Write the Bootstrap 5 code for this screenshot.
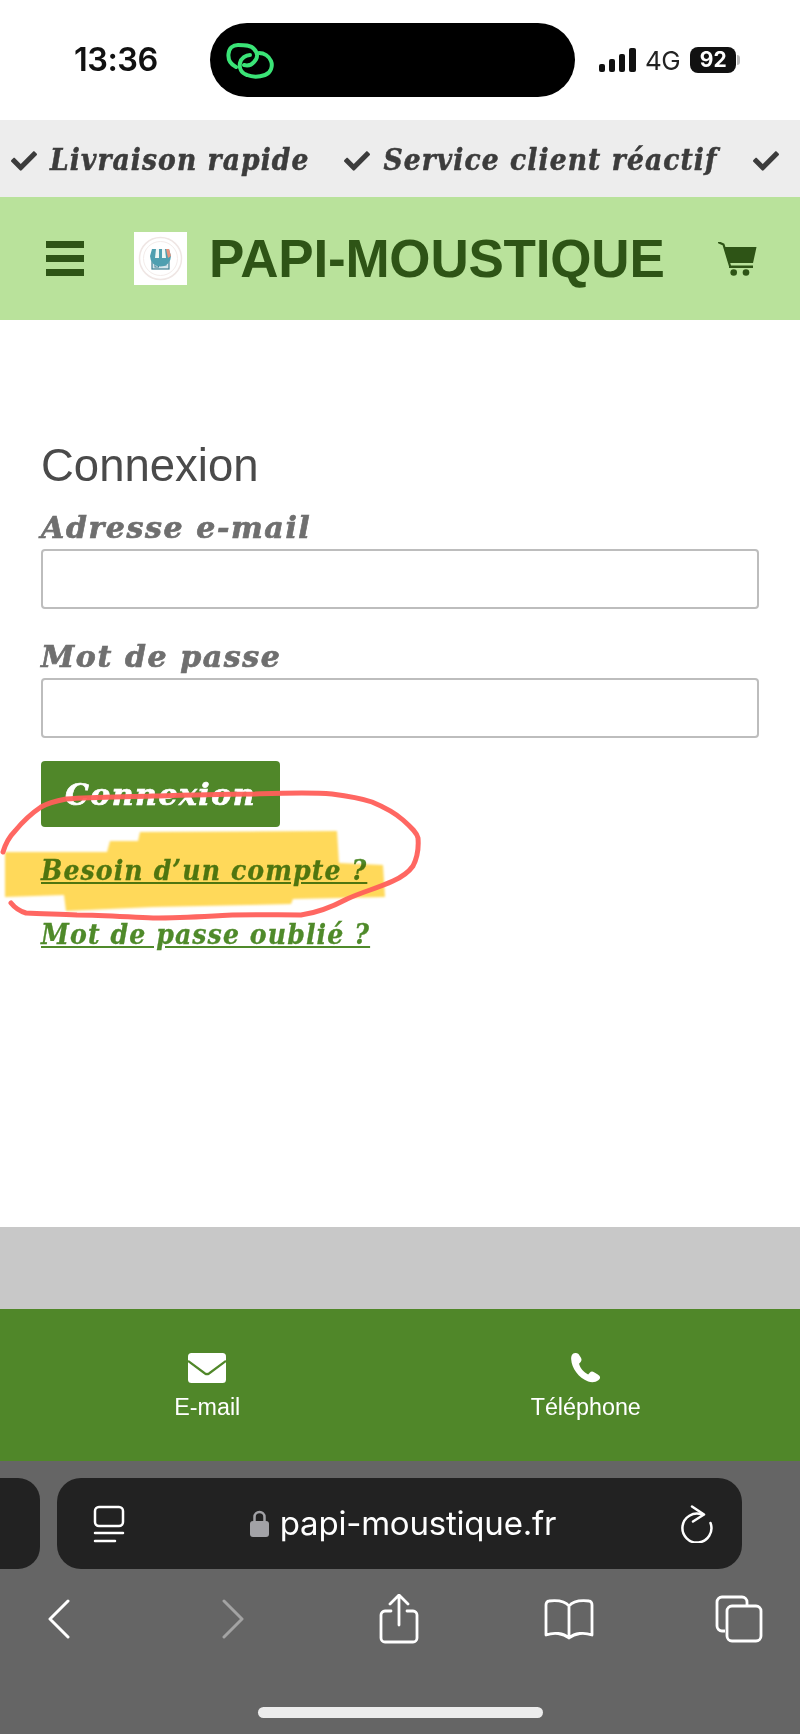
<!DOCTYPE html>
<html lang="fr">
<head>
    <meta charset="UTF-8">
    <title>Connexion - Papi-Moustique</title>
    <meta name="viewport" content="width=device-width, initial-scale=1">
    <link href="https://cdn.jsdelivr.net/npm/bootstrap@5.3.0/dist/css/bootstrap.min.css" rel="stylesheet">
    <style>
        html, body { height: 1734px; overflow: hidden; }
        body { font-family: "Liberation Sans", Arial, sans-serif; background: #fff; width: 800px; position: relative; }
        .deco { font-family: "DejaVu Serif", serif; font-weight: 700; font-style: italic; -webkit-text-stroke: .7px currentColor; }
        .deco-narrow { font-family: "DejaVu Serif Condensed", "DejaVu Serif", serif; font-weight: 700; font-style: italic; -webkit-text-stroke: .5px currentColor; }

        /* iOS status bar */
        .status-area { height: 120px; padding-left: 74px; }
        .status-time { font-family: Inter, sans-serif; font-weight: 600; font-size: 32.5px; width: 136px; color: #111; letter-spacing: -.5px; }
        .island { width: 365px; height: 74px; background: #000; border-radius: 37px; margin-right: 24px; padding-left: 15px; }
        .status-net { font-family: Inter, sans-serif; font-size: 26px; color: #222; margin: 0 10px 0 8px; letter-spacing: -.5px; }
        .batt { width: 46px; height: 26px; background: #111; color: #fff; border-radius: 8px; font-family: Inter, sans-serif; font-weight: 700; font-size: 21px; line-height: 26px; text-align: center; }
        .batt-tip { width: 3px; height: 10px; background: #bbb; border-radius: 0 3px 3px 0; margin-left: 1px; }

        /* shop header */
        .promo-strip { height: 77px; background: #ededed; color: #3c3c3c; font-size: 29.5px; letter-spacing: 1.1px; white-space: nowrap; overflow: hidden; padding: 4px 0 0 11px; }
        .promo-item { margin-right: 35px; gap: 13px; }
        .promo-item svg { flex-shrink: 0; }
        .shop-bar { height: 123px; background: #b9e29b; color: #2e5416; padding-left: 46px; }
        .burger { width: 38px; gap: 7px; margin-right: 50px; }
        .burger span { height: 7px; background: #2e5416; display: block; }
        .shop-logo { width: 53px; height: 53px; background: #fff; margin-right: 22px; }
        .shop-name { font-size: 53px; font-weight: 700; line-height: 1; margin: 0 53px 0 0; letter-spacing: -.2px; }

        /* login form */
        .login-area { flex: 1; padding: 118px 41px 0; color: #4a4a4a; }
        .login-title { font-size: 45.5px; font-weight: 400; line-height: 56px; margin: 0 0 16px; }
        .login-label { display: block; font-size: 30px; letter-spacing: 1.6px; color: #6f6f6f; line-height: 36px; margin-bottom: 3px; }
        .login-input { height: 60px; border: 2px solid #bdbdbd; border-radius: 4px; margin-bottom: 30px; }
        .login-btn { width: 239px; height: 66px; background: #508729; border: 0; color: #fff; font-size: 30px; letter-spacing: 1.5px; border-radius: 4px; margin-top: -7px; padding: 0; }
        .login-link { display: block; color: #4f8a2a; font-size: 28px; letter-spacing: 1.1px; line-height: 36px; text-decoration: underline; -webkit-text-stroke: .3px currentColor; }
        .first-link { margin-top: 26px; margin-bottom: 28px; }

        /* hand drawn marks on the screenshot */
        .marks { position: absolute; left: 0; top: 0; pointer-events: none; }
        .mark-yellow { fill: #ffd95a; mix-blend-mode: multiply; filter: blur(1.2px); }
        .mark-red { fill: none; stroke: #ff5f5a; stroke-width: 5; stroke-linecap: round; stroke-linejoin: round; opacity: .95; }

        /* footer */
        .footer-gap { height: 82px; background: #c8c8c8; }
        .contact-bar { height: 152px; background: #508729; color: #fff; padding: 44px 25px 0 18px; font-size: 23.3px; line-height: 28px; }
        .contact-bar svg { display: block; margin: 0 auto 10px; }

        /* Safari chrome */
        .safari { height: 273px; background: #656565; color: #fff; position: relative; }
        .url-row { padding-top: 17px; height: 108px; }
        .prev-tab { width: 40px; height: 91px; background: #222; border-radius: 0 22px 22px 0; margin-right: 17px; }
        .url-box { width: 685px; height: 91px; background: #222; border-radius: 24px; padding: 0 29px 0 36px; }
        .url-text { font-family: Inter, sans-serif; font-size: 33px; letter-spacing: -.2px; margin-left: 11px; }
        .tool-row { padding-left: 37px; gap: 126px; height: 66px; margin-top: 17px; }
        .tool-cell { width: 44px; display: flex; justify-content: center; }
        .tool-cell svg { flex-shrink: 0; }
        .fwd-cell { transform: translateX(4px); }
        .home-pill { position: absolute; left: 258px; top: 246px; width: 285px; height: 11px; background: #ececec; border-radius: 6px; }
    </style>
</head>
<body class="d-flex flex-column">

<div class="status-area d-flex align-items-center flex-shrink-0 bg-white">
    <div class="status-time">13:36</div>
    <div class="island d-flex align-items-center">
        <svg width="50" height="40" viewBox="-2 -2 50 40" fill="none" stroke="#3be477" stroke-width="4" stroke-linecap="round">
            <path d="M9 25C3 22 1 17 1.500 12 2 6 6 3 11 3 17 3 24 3 27 7 31 11 31 16 27 20 25 22.500 21 24 17 23"/>
            <path d="M32 11C37 11 42 14 44 19 46 24 44 31 38 33 32 35 25 35 20 33 14 31 12 26 13 21 14 16 19 13 23 13"/>
        </svg>
    </div>
    <svg width="38" height="24" viewBox="0 0 38 24" fill="#111">
        <rect x="0" y="16" width="6" height="8" rx="2"/>
        <rect x="10" y="11" width="6" height="13" rx="2"/>
        <rect x="20" y="6" width="6" height="18" rx="2"/>
        <rect x="30" y="0" width="7" height="24" rx="2"/>
    </svg>
    <span class="status-net">4G</span>
    <div class="batt">92</div>
    <div class="batt-tip"></div>
</div>

<div class="promo-strip deco-narrow d-flex align-items-center flex-shrink-0">
    <span class="promo-item d-flex align-items-center">
        <svg width="26" height="26" viewBox="0 0 512 512" fill="#3c3c3c"><path d="M173.9 439.4l-166.4-166.4c-10-10-10-26.2 0-36.2l36.2-36.2c10-10 26.2-10 36.2 0L192 312.7 432.1 72.6c10-10 26.2-10 36.2 0l36.2 36.2c10 10 10 26.2 0 36.2l-294.4 294.4c-10 10-26.2 10-36.2 0z"/></svg>
        Livraison rapide
    </span>
    <span class="promo-item d-flex align-items-center">
        <svg width="26" height="26" viewBox="0 0 512 512" fill="#3c3c3c"><path d="M173.9 439.4l-166.4-166.4c-10-10-10-26.2 0-36.2l36.2-36.2c10-10 26.2-10 36.2 0L192 312.7 432.1 72.6c10-10 26.2-10 36.2 0l36.2 36.2c10 10 10 26.2 0 36.2l-294.4 294.4c-10 10-26.2 10-36.2 0z"/></svg>
        Service client réactif
    </span>
    <span class="promo-item d-flex align-items-center">
        <svg width="26" height="26" viewBox="0 0 512 512" fill="#3c3c3c"><path d="M173.9 439.4l-166.4-166.4c-10-10-10-26.2 0-36.2l36.2-36.2c10-10 26.2-10 36.2 0L192 312.7 432.1 72.6c10-10 26.2-10 36.2 0l36.2 36.2c10 10 10 26.2 0 36.2l-294.4 294.4c-10 10-26.2 10-36.2 0z"/></svg>
    </span>
</div>

<nav class="shop-bar d-flex align-items-center flex-shrink-0">
    <div class="burger d-flex flex-column"><span></span><span></span><span></span></div>
    <svg class="shop-logo flex-shrink-0" viewBox="0 0 53 53">
        <rect width="53" height="53" fill="#fff"/>
        <circle cx="26.500" cy="26.500" r="21" fill="none" stroke="#efe6e4" stroke-width="1.500"/>
        <circle cx="26.500" cy="26.500" r="17" fill="none" stroke="#f3ecea" stroke-width="1"/>
        <rect x="18" y="25" width="17" height="12" fill="#d6e6ec" stroke="#3f7f92" stroke-width="1.200"/>
        <rect x="21" y="29" width="3.500" height="6" fill="#fff" stroke="#3f7f92"/>
        <rect x="27" y="29" width="5" height="4" fill="#fff" stroke="#3f7f92"/>
        <path d="M18 17h17l2 7a2.500 2.500 0 0 1-21 0z" fill="#4f9fb0"/>
        <path d="M22 17h3v9h-4zM28 17h3l1 9h-4z" fill="#eef6f4"/>
        <path d="M32 17h3l2 7-3 2z" fill="#e8927c"/>
    </svg>
    <div class="shop-name">PAPI-MOUSTIQUE</div>
    <svg width="39" height="34" viewBox="11 9 39 34" fill="#2e5416">
        <path d="M12 9.500l4.500 2 6.500 21.500" fill="none" stroke="#2e5416" stroke-width="2.200" stroke-linecap="round" stroke-linejoin="round"/>
        <path d="M17 14H49.500L46 30H21.500z"/>
        <rect x="22" y="32.500" width="24" height="2.500"/>
        <circle cx="26.700" cy="39.500" r="3.300"/>
        <circle cx="39" cy="39.500" r="3.300"/>
    </svg>
</nav>

<main class="login-area">
    <h1 class="login-title">Connexion</h1>
    <form>
        <label class="login-label deco" for="email">Adresse e-mail</label>
        <input id="email" class="form-control login-input" type="email">
        <label class="login-label deco" for="pass">Mot de passe</label>
        <input id="pass" class="form-control login-input" type="password">
        <button type="button" class="btn login-btn deco">Connexion</button>
    </form>
    <a href="#" class="login-link deco-narrow first-link">Besoin d’un compte ?</a>
    <a href="#" class="login-link deco-narrow">Mot de passe oublié ?</a>
</main>

<div class="footer-gap flex-shrink-0"></div>

<div class="contact-bar row g-0 flex-shrink-0 text-center">
    <div class="col-6">
        <svg width="38" height="30" viewBox="0 0 38 30">
            <rect width="38" height="30" rx="3.500" fill="#fff"/>
            <path d="M0 8L17 20.500C18.200 21.300 19.800 21.300 21 20.500L38 8" fill="none" stroke="#508729" stroke-width="2.200"/>
        </svg>
        E-mail
    </div>
    <div class="col-6">
        <svg width="30" height="30" viewBox="8 8 28 28" fill="#fff"><path d="M12 8C9 8 8 11 8.200 14 8.600 22 15 31 24 34.500 27 35.700 31 35.500 33.500 33.500 36 31.500 35.500 29.500 33 28L29.500 26C28 25 26.500 25.200 25.500 26.500L24 28C20 26 16.500 22 15.500 18L17 16.500C18.200 15 18 13.500 17 12L15 9C14 8 13 8 12 8Z"/></svg>
        Téléphone
    </div>
</div>

<div class="safari flex-shrink-0">
    <div class="url-row d-flex">
        <div class="prev-tab"></div>
        <div class="url-box d-flex align-items-center">
            <svg width="32" height="38" viewBox="0 0 32 38" fill="none" stroke="#fff" stroke-width="2.500" stroke-linecap="round">
                <rect x="2" y="2" width="28" height="19" rx="4"/>
                <path d="M2 28h28M2 36h20"/>
            </svg>
            <div class="flex-grow-1 d-flex align-items-center justify-content-center ps-3 pe-3">
                <svg width="19" height="27" viewBox="0 0 19 27">
                    <path d="M4.500 13V7a5 5 0 0 1 10 0v6" fill="none" stroke="#a2a2a6" stroke-width="2.500"/>
                    <rect x="0" y="11" width="19" height="16" rx="3" fill="#a2a2a6"/>
                </svg>
                <span class="url-text">papi-moustique.fr</span>
            </div>
            <svg width="32" height="38" viewBox="0 0 32 38" fill="none" stroke="#fff" stroke-width="2.500" stroke-linecap="round" stroke-linejoin="round">
                <path d="M21 9.500A14.500 14.500 0 1 0 29.500 18"/>
                <path d="M11 1.500l12 8-11 7"/>
            </svg>
        </div>
    </div>
    <div class="tool-row d-flex align-items-center">
        <div class="tool-cell"><svg width="24" height="40" viewBox="0 0 24 40" fill="none" stroke="#fff" stroke-width="3" stroke-linecap="round" stroke-linejoin="round"><path d="M21 2L3 20l18 18"/></svg></div>
        <div class="tool-cell fwd-cell"><svg width="24" height="40" viewBox="0 0 24 40" fill="none" stroke="#a3a3a3" stroke-width="3" stroke-linecap="round" stroke-linejoin="round"><path d="M3 2l18 18L3 38"/></svg></div>
        <div class="tool-cell"><svg width="40" height="50" viewBox="0 0 40 50" fill="none" stroke="#fff" stroke-width="2.800" stroke-linecap="round" stroke-linejoin="round"><path d="M12 17H6a4 4 0 0 0-4 4v23a4 4 0 0 0 4 4h28a4 4 0 0 0 4-4V21a4 4 0 0 0-4-4h-6"/><path d="M20 31V2M11 10l9-9 9 9"/></svg></div>
        <div class="tool-cell"><svg width="50" height="42" viewBox="0 0 50 42" fill="none" stroke="#fff" stroke-width="2.800" stroke-linecap="round" stroke-linejoin="round"><path d="M25 8C21 3 14 2 5 3 3 3 2 5 2 7v30c8-3 17-2 23 3 6-5 15-6 23-3V7c0-2-1-4-3-4-9-1-16 0-20 5zM25 8v32"/></svg></div>
        <div class="tool-cell"><svg width="48" height="48" viewBox="0 0 48 48" fill="none" stroke="#fff" stroke-width="2.800" stroke-linejoin="round"><path d="M10 36H7a5 5 0 0 1-5-5V7a5 5 0 0 1 5-5h20a5 5 0 0 1 5 5v4"/><rect x="12" y="11" width="34" height="35" rx="5"/></svg></div>
    </div>
    <div class="home-pill"></div>
</div>

<!-- highlight and circle drawn by hand over the page -->
<svg class="marks" width="800" height="1000" viewBox="0 0 800 1000">
    <path class="mark-yellow" d="M5 852H107L110 841H138L140 832 337 831 339 863 383 865 385 897 293 899 291 904 153 907 66 911 64 895 5 897Z"/>
    <path class="mark-red" d="M3 852C6 842 10 836 15 831 24 820 32 813 41 807 48 803 56 801 66 799 95 797 125 797 153 796 190 795 222 794 255 794 285 793 310 792 332 794 348 796 360 798 372 802 384 807 394 812 403 820 412 828 417 833 418 838 419 850 417 858 413 866 408 873 402 877 393 881 378 888 362 892 347 899 330 908 316 913 301 915 270 915 243 914 214 916 195 917 175 918 153 918 128 917 102 915 77 915 58 914 42 914 26 913 19 911 15 908 11 903"/>
</svg>

</body>
</html>
